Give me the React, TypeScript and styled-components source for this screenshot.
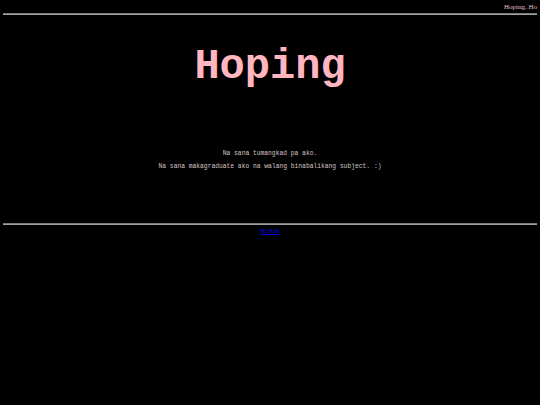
import React from 'react'
import styled, { createGlobalStyle } from 'styled-components'

const GlobalStyle = createGlobalStyle`
    html, body {
        margin: 0;
        padding: 0;
        background: #000;
    }
`

const Page = styled.div`
    width: 540px;
    min-height: 405px;
    background: #000;
`

const Ticker = styled.div`
    height: 13px;
    overflow: hidden;
    white-space: nowrap;
    text-align: right;
    padding-right: 3px;
    font-family: "Liberation Serif", serif;
    font-size: 7px;
    line-height: 14px;
    color: #e6bccb;
`

const Rule = styled.hr`
    margin: 0 3px;
    height: 0;
    border: 0;
    border-top: 1px solid #7a7a7a;
    border-bottom: 1px solid #a0a0a0;
`

const Main = styled.main`
    height: 208px;
    display: flex;
    flex-direction: column;
    align-items: center;
    font-family: "Courier New", "Nimbus Mono PS", "Nimbus Mono L", FreeMono, "Courier 10 Pitch", Courier, "Liberation Mono", monospace;
`

const Title = styled.h1`
    margin: 28px 0 0;
    font-size: 42px;
    line-height: 48px;
    font-weight: bold;
    color: #ffb6c1;
`

const Lines = styled.div`
    margin-top: 59px;
    display: flex;
    flex-direction: column;
    align-items: center;
    gap: 5px;
`

const Line = styled.p`
    margin: 0;
    font-size: 6.3px;
    line-height: 8px;
    color: #d4c4c4;
    white-space: nowrap;
`

const Footer = styled.div`
    display: flex;
    justify-content: center;
    padding-top: 1px;
    font-family: "Liberation Serif", serif;
    font-size: 7px;
    line-height: 10px;
`

const HomeLink = styled.a`
    color: #0000dd;
    text-decoration: underline;
`

export default function App() {
    return (
        <Page>
            <GlobalStyle />
            <Ticker>Hoping. Ho</Ticker>
            <Rule />
            <Main>
                <Title>Hoping</Title>
                <Lines>
                    <Line>Na sana tumangkad pa ako.</Line>
                    <Line>Na sana makagraduate ako na walang binabalikang subject. :)</Line>
                </Lines>
            </Main>
            <Rule />
            <Footer>
                <HomeLink href="#">HOME</HomeLink>
            </Footer>
        </Page>
    )
}
